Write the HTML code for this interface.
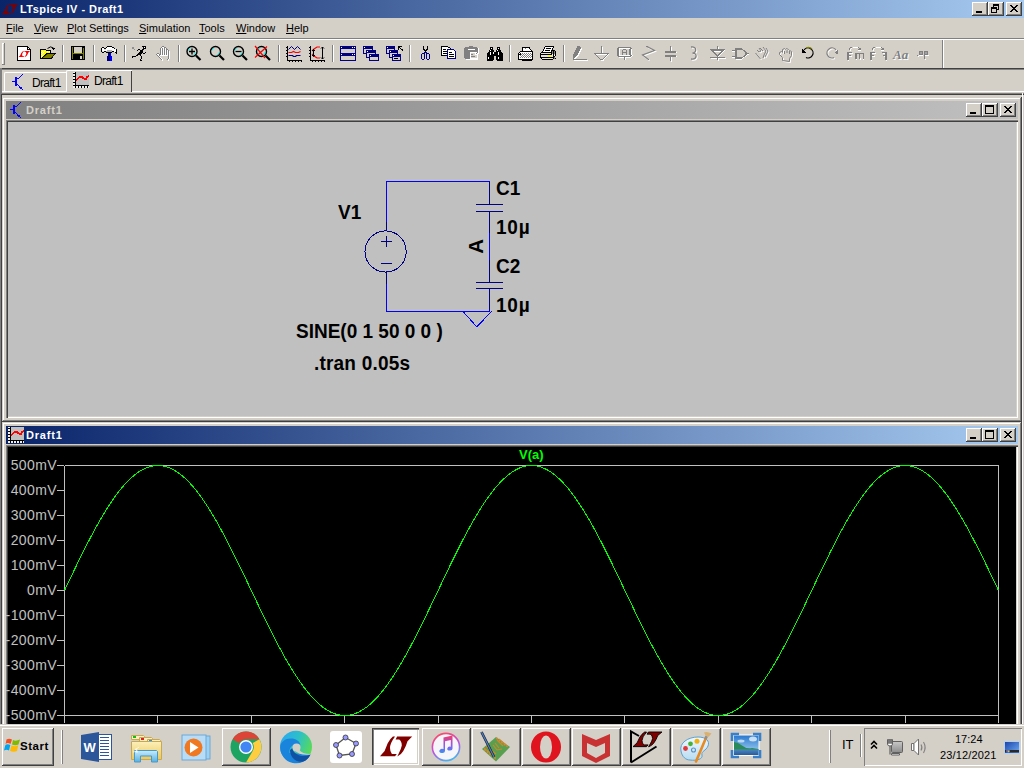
<!DOCTYPE html>
<html><head><meta charset="utf-8">
<style>
*{box-sizing:border-box;margin:0;padding:0}
html,body{width:1024px;height:768px;overflow:hidden;background:#d4d0c8;font-family:"Liberation Sans",sans-serif;font-size:11px;color:#000}
.a{position:absolute}
#title{left:0;top:0;width:1024px;height:18px;background:linear-gradient(to right,#0a246a,#a6caf0)}
#title .t{left:20px;top:3px;color:#fff;font-weight:bold;font-size:11px;letter-spacing:.45px;line-height:13px;white-space:nowrap}
.cb{width:16px;height:14px;background:#d4d0c8;box-shadow:inset -1px -1px #404040,inset 1px 1px #fff,inset -2px -2px #808080,inset 2px 2px #d4d0c8}
#menu{left:0;top:18px;width:1024px;height:20px}
#menu span{position:absolute;top:4px;white-space:nowrap}
#menu u{text-decoration:underline;text-underline-offset:1px}
.hl{height:1px;width:1024px;left:0}
.yl{position:absolute;right:967px;color:#c0c0c0;font-size:14px;letter-spacing:.4px;white-space:nowrap;line-height:16px}
.win{border:0}
.tbtn{background:#d4d0c8;box-shadow:inset -1px -1px #404040,inset 1px 1px #fff,inset -2px -2px #808080}
.tt{font-size:11px;line-height:13px;white-space:nowrap}
.tabt{font-size:12px;letter-spacing:-.7px;white-space:nowrap;line-height:13px}
.sl{font-weight:bold;font-size:19px;line-height:19px;white-space:nowrap;color:#000;transform:scaleY(1.08);transform-origin:0 16px}
</style></head><body>
<!-- main title bar -->
<div id="title" class="a">
  <svg class="a" style="left:2px;top:4px" width="16" height="11" viewBox="0 0 32 21"><g fill="#800000"><path d="M0 19.8H15L16.8 17.4H11.9Q10 15 10 11.5Q10 7 15 0.1H12.9Q9.8 2.6 7.7 6.8L4.6 14.6z"/><path d="M17.1 0H32.2L27.5 4.7Q26 9.9 23.3 14.6Q21 18.7 17.3 20L19.2 16.1Q21 12.5 21.8 8.9Q21.8 4.7 19.2 2.9H15.6z"/></g></svg>
  <div class="a t">LTspice IV - Draft1</div>
  <div class="a cb" style="left:972px;top:2px"></div>
  <div class="a cb" style="left:988px;top:2px"></div>
  <div class="a cb" style="left:1006px;top:2px"></div>
</div>
<!-- menu -->
<div id="menu" class="a">
  <span style="left:6px"><u>F</u>ile</span>
  <span style="left:34px"><u>V</u>iew</span>
  <span style="left:67px"><u>P</u>lot Settings</span>
  <span style="left:139px"><u>S</u>imulation</span>
  <span style="left:199px"><u>T</u>ools</span>
  <span style="left:236px"><u>W</u>indow</span>
  <span style="left:286px"><u>H</u>elp</span>
</div>
<div class="a hl" style="top:38px;background:#808080"></div>
<div class="a hl" style="top:39px;background:#fff"></div>
<!-- toolbar -->
<div id="tb" class="a" style="left:0;top:40px;width:1024px;height:28px"></div>
<!--TB-->
<svg class="a" style="left:0;top:0" width="1024" height="70" shape-rendering="crispEdges">
<!-- grip -->
<path d="M2 43h2v1h-1v20h-1z" fill="#fff"/><path d="M4 43h1v22h-3v-1h2z" fill="#808080"/>
<!-- separators -->
<g fill="#808080"><rect x="62" y="45" width="1" height="17"/><rect x="93" y="45" width="1" height="17"/><rect x="124" y="45" width="1" height="17"/><rect x="178" y="45" width="1" height="17"/><rect x="278" y="45" width="1" height="17"/><rect x="332" y="45" width="1" height="17"/><rect x="409" y="45" width="1" height="17"/><rect x="509" y="45" width="1" height="17"/><rect x="563" y="45" width="1" height="17"/><rect x="942" y="40" width="1" height="28"/></g>
<g fill="#fff"><rect x="63" y="45" width="1" height="17"/><rect x="94" y="45" width="1" height="17"/><rect x="125" y="45" width="1" height="17"/><rect x="179" y="45" width="1" height="17"/><rect x="279" y="45" width="1" height="17"/><rect x="333" y="45" width="1" height="17"/><rect x="410" y="45" width="1" height="17"/><rect x="510" y="45" width="1" height="17"/><rect x="564" y="45" width="1" height="17"/><rect x="943" y="40" width="1" height="28"/></g>
<!-- new doc -->
<path d="M17.5 46.5H27.5L30.5 49.5V60.5H17.5Z" fill="#fff" stroke="#000"/>
<path d="M27.5 46.5V49.5H30.5" fill="none" stroke="#000"/>
<g transform="translate(18.5,51) scale(0.36,0.3)" fill="#f00" shape-rendering="auto"><path d="M0 19.8H15L16.8 17.4H11.9Q10 15 10 11.5Q10 7 15 0.1H12.9Q9.8 2.6 7.7 6.8L4.6 14.6z"/><path d="M17.1 0H32.2L27.5 4.7Q26 9.9 23.3 14.6Q21 18.7 17.3 20L19.2 16.1Q21 12.5 21.8 8.9Q21.8 4.7 19.2 2.9H15.6z"/></g>
<!-- open folder -->
<path d="M40 49h5l1 1h5v3h5l-4.5 6H40z" fill="#000"/>
<path d="M41 50h4l1 1h4v2h-3l-6 5z" fill="#ffff00"/>
<path d="M42 51h1v1h-1zM44 51h1v1h-1zM41 52h1v1h-1zM43 52h1v1h-1zM42 53h1v1h-1zM41 54h1v1h-1zM42 55h1v1h-1zM41 56h1v1h-1zM47 51h1v1h-1zM49 51h1v1h-1z" fill="#fff"/>
<path d="M42.5 58L47.5 54H54.5L51 58z" fill="#808000" shape-rendering="auto"/>
<path d="M47.5 48.5Q50.5 45.5 53.5 48" fill="none" stroke="#000" shape-rendering="auto"/>
<path d="M52 48h3l-1.5 2z" fill="#000"/>
<!-- floppy -->
<rect x="71" y="46" width="14" height="14" fill="#000"/>
<rect x="72" y="47" width="1" height="12" fill="#808000"/><rect x="83" y="48" width="1" height="11" fill="#808000"/>
<rect x="74" y="47" width="8" height="6" fill="#d4d0c8"/>
<rect x="73" y="53" width="10" height="1" fill="#808000"/>
<rect x="80" y="56" width="2" height="3" fill="#d4d0c8"/>
<!-- hammer -->
<path fill="#000" d="M107 46h5v1h-5zM102 47h2v1h-2zM106 47h1v1h-1zM112 47h2v1h-2zM101 48h1v1h-1zM104 48h2v1h-2zM114 48h1v1h-1zM101 49h1v1h-1zM116 49h1v1h-1zM101 50h1v1h-1zM116 50h1v1h-1zM101 51h1v1h-1zM104 51h2v1h-2zM112 51h2v1h-2zM116 51h1v1h-1zM102 52h2v1h-2zM106 52h6v1h-6zM115 52h2v1h-2zM116 53h1v1h-1z"/><path fill="#fff" d="M107 47h5v1h-5zM102 48h2v1h-2zM106 48h8v1h-8zM102 49h2v1h-2zM106 49h10v1h-10zM102 50h5v1h-5zM112 50h4v1h-4zM114 51h2v1h-2z"/><path fill="#e0e0e0" d="M104 49h2v1h-2zM102 51h2v1h-2z"/><path fill="#b0b0b0" d="M107 50h5v1h-5zM106 51h6v1h-6z"/><path fill="#000080" d="M108 53h2v1h-2zM108 54h2v1h-2zM108 55h2v1h-2zM107 56h3v1h-3zM107 57h3v1h-3zM107 58h3v1h-3zM107 59h3v1h-3zM107 60h3v1h-3z"/><path fill="#0000ff" d="M110 53h1v1h-1zM110 54h1v1h-1zM110 55h1v1h-1zM110 56h2v1h-2zM110 57h2v1h-2zM110 58h2v1h-2zM110 59h2v1h-2zM110 60h2v1h-2z"/>
<!-- running man -->
<path fill="#000" d="M142 46h4v1h-4zM143 47h1v1h-1zM145 47h1v1h-1zM143 48h3v1h-3zM138 49h2v1h-2zM142 49h2v1h-2zM137 50h1v1h-1zM140 50h3v1h-3zM140 51h3v1h-3zM139 52h4v1h-4zM145 52h1v1h-1zM138 53h4v1h-4zM143 53h2v1h-2zM137 54h4v1h-4zM136 55h2v1h-2zM140 55h1v1h-1zM132 56h4v1h-4zM141 56h1v1h-1zM132 57h1v1h-1zM141 57h1v1h-1zM141 58h1v1h-1zM140 59h1v1h-1zM140 60h2v1h-2z"/><path fill="#909090" d="M132 47h2v1h-2zM132 48h2v1h-2zM134 49h1v1h-1z"/><path fill="#fff" d="M144 47h1v1h-1z"/>
<!-- hand disabled -->
<path fill="#808080" d="M162 46h2v1h-2zM161 47h1v1h-1zM164 47h2v1h-2zM160 48h1v1h-1zM162 48h1v1h-1zM164 48h1v1h-1zM166 48h1v1h-1zM160 49h1v1h-1zM162 49h1v1h-1zM164 49h1v1h-1zM166 49h2v1h-2zM160 50h1v1h-1zM162 50h1v1h-1zM164 50h1v1h-1zM166 50h1v1h-1zM168 50h1v1h-1zM160 51h1v1h-1zM162 51h1v1h-1zM164 51h1v1h-1zM166 51h1v1h-1zM168 51h1v1h-1zM160 52h1v1h-1zM162 52h1v1h-1zM164 52h1v1h-1zM166 52h1v1h-1zM168 52h1v1h-1zM157 53h2v1h-2zM160 53h1v1h-1zM162 53h1v1h-1zM164 53h1v1h-1zM166 53h1v1h-1zM168 53h1v1h-1zM156 54h1v1h-1zM159 54h2v1h-2zM162 54h1v1h-1zM164 54h1v1h-1zM166 54h1v1h-1zM168 54h1v1h-1zM157 55h1v1h-1zM159 55h1v1h-1zM168 55h1v1h-1zM158 56h1v1h-1zM168 56h1v1h-1zM159 57h1v1h-1zM168 57h1v1h-1zM160 58h1v1h-1zM168 58h1v1h-1zM161 59h1v1h-1zM167 59h1v1h-1z"/><path fill="#fff" d="M162 47h2v1h-2zM161 48h1v1h-1zM163 48h1v1h-1zM165 48h1v1h-1zM161 49h1v1h-1zM163 49h1v1h-1zM165 49h1v1h-1zM161 50h1v1h-1zM163 50h1v1h-1zM165 50h1v1h-1zM167 50h1v1h-1zM161 51h1v1h-1zM163 51h1v1h-1zM165 51h1v1h-1zM167 51h1v1h-1zM169 51h1v1h-1zM161 52h1v1h-1zM163 52h1v1h-1zM165 52h1v1h-1zM167 52h1v1h-1zM169 52h1v1h-1zM161 53h1v1h-1zM163 53h1v1h-1zM165 53h1v1h-1zM167 53h1v1h-1zM169 53h1v1h-1zM157 54h2v1h-2zM161 54h1v1h-1zM163 54h1v1h-1zM165 54h1v1h-1zM167 54h1v1h-1zM169 54h1v1h-1zM158 55h1v1h-1zM160 55h8v1h-8zM169 55h1v1h-1zM159 56h1v1h-1zM169 56h1v1h-1zM160 57h1v1h-1zM169 57h1v1h-1zM161 58h1v1h-1zM169 58h1v1h-1zM162 59h1v1h-1zM168 59h1v1h-1zM162 60h1v1h-1zM168 60h1v1h-1z"/>
<!-- magnifiers -->
<g shape-rendering="auto">
<circle cx="192" cy="51.5" r="5" fill="#d4d0c8" stroke="#000" stroke-width="1.4"/>
<path d="M189 51.5h6M192 48.5v6" stroke="#000" stroke-width="1.3"/>
<path d="M196 55.5l4.5 4.5" stroke="#000" stroke-width="2.2"/>
<path d="M188.5 50.5a4 4 0 0 1 2-2.5M195.5 52.5a4 4 0 0 1-2 2.5" stroke="#00ffff" stroke-width="1" fill="none"/>
<circle cx="215.5" cy="51.5" r="5" fill="#d4d0c8" stroke="#000" stroke-width="1.4"/>
<path d="M219.5 55.5l4.5 4.5" stroke="#000" stroke-width="2.2"/>
<path d="M212 50.5a4 4 0 0 1 2-2.5M219 52.5a4 4 0 0 1-2 2.5" stroke="#00ffff" stroke-width="1" fill="none"/>
<circle cx="238.5" cy="51.5" r="5" fill="#d4d0c8" stroke="#000" stroke-width="1.4"/>
<path d="M235.5 51.5h6" stroke="#000" stroke-width="1.3"/>
<path d="M242.5 55.5l4.5 4.5" stroke="#000" stroke-width="2.2"/>
<path d="M235 50.5a4 4 0 0 1 2-2.5M242 52.5a4 4 0 0 1-2 2.5" stroke="#00ffff" stroke-width="1" fill="none"/>
<circle cx="261.5" cy="51.5" r="5" fill="#d4d0c8" stroke="#000" stroke-width="1.4"/><path d="M258 50.5a4 4 0 0 1 2-2.5M265 52.5a4 4 0 0 1-2 2.5M259 53l4-3" stroke="#00ffff" stroke-width="1.3" fill="none"/>
<path d="M265.5 55.5l4.5 4.5" stroke="#000" stroke-width="2.2"/>
<path d="M255 46l10 12M267 46.5l-12 11" stroke="#f00" stroke-width="1.2"/>
</g>
<!-- plot icons -->
<g fill="#000"><rect x="287" y="46" width="1" height="15"/><rect x="287" y="60" width="15" height="1"/>
<path d="M286 47h1v1h-1zM286 50h1v1h-1zM286 53h1v1h-1zM286 56h1v1h-1zM289 61h1v1h-1zM292 61h1v1h-1zM295 61h1v1h-1zM298 61h1v1h-1zM301 61h1v1h-1z"/>
<rect x="310" y="46" width="1" height="15"/><rect x="310" y="60" width="15" height="1"/>
<path d="M309 47h1v1h-1zM309 50h1v1h-1zM309 53h1v1h-1zM309 56h1v1h-1zM312 61h1v1h-1zM315 61h1v1h-1zM318 61h1v1h-1zM321 61h1v1h-1zM324 61h1v1h-1z"/></g>
<g fill="none" shape-rendering="auto">
<path d="M288.5 49.5l3-3 3 3 3-3 3 3" stroke="#000080"/>
<path d="M288.5 52.5h3l2-1 2 1h3l2-1" stroke="#f00" stroke-width="1.2"/>
<path d="M288.5 55.5h4l1 1h2l1-1h4" stroke="#000080" stroke-width="1.2"/>
<path d="M320 47h-3l-3 2-2 2M312 54l2 2 3 2h3" stroke="#f00" stroke-width="1.2"/>
<path d="M322.5 47v12M321 48.5l1.5-1.5 1.5 1.5M321 57.5l1.5 1.5 1.5-1.5M313.5 50v6M312 51l1.5-1.5 1.5 1.5M312 55l1.5 1.5 1.5-1.5" stroke="#000"/>
</g>
<!-- tile -->
<path fill="#000080" d="M340 46h16v1h-16zM340 47h1v1h-1zM342 47h10v1h-10zM353 47h1v1h-1zM355 47h1v1h-1zM340 48h16v1h-16zM340 49h1v1h-1zM355 49h1v1h-1zM340 50h1v1h-1zM355 50h1v1h-1zM340 51h1v1h-1zM355 51h1v1h-1zM340 52h1v1h-1zM355 52h1v1h-1zM340 53h16v1h-16zM340 54h1v1h-1zM342 54h10v1h-10zM353 54h1v1h-1zM355 54h1v1h-1zM340 55h16v1h-16zM340 56h1v1h-1zM355 56h1v1h-1zM340 57h1v1h-1zM355 57h1v1h-1zM340 58h1v1h-1zM355 58h1v1h-1zM340 59h1v1h-1zM355 59h1v1h-1zM340 60h16v1h-16z"/><path fill="#fff" d="M341 47h1v1h-1zM352 47h1v1h-1zM354 47h1v1h-1zM341 54h1v1h-1zM352 54h1v1h-1zM354 54h1v1h-1z"/><path fill="#d4d0c8" d="M341 49h14v1h-14zM341 50h14v1h-14zM341 51h14v1h-14zM341 52h14v1h-14zM341 56h14v1h-14zM341 57h14v1h-14zM341 58h14v1h-14zM341 59h14v1h-14z"/>
<!-- cascade -->
<path fill="#000080" d="M363 46h10v1h-10zM363 47h1v1h-1zM365 47h8v1h-8zM363 48h10v1h-10zM363 49h1v1h-1zM372 49h1v1h-1zM363 50h1v1h-1zM372 50h1v1h-1zM363 51h1v1h-1zM372 51h1v1h-1zM363 52h1v1h-1zM372 52h1v1h-1zM363 53h10v1h-10z"/><path fill="#fff" d="M364 47h1v1h-1z"/><path fill="#d4d0c8" d="M364 49h8v1h-8zM364 50h8v1h-8zM364 51h8v1h-8zM364 52h8v1h-8z"/><path fill="#000080" d="M366 50h10v1h-10zM366 51h1v1h-1zM368 51h8v1h-8zM366 52h10v1h-10zM366 53h1v1h-1zM375 53h1v1h-1zM366 54h1v1h-1zM375 54h1v1h-1zM366 55h1v1h-1zM375 55h1v1h-1zM366 56h1v1h-1zM375 56h1v1h-1zM366 57h10v1h-10z"/><path fill="#fff" d="M367 51h1v1h-1z"/><path fill="#d4d0c8" d="M367 53h8v1h-8zM367 54h8v1h-8zM367 55h8v1h-8zM367 56h8v1h-8z"/><path fill="#000080" d="M369 54h10v1h-10zM369 55h1v1h-1zM371 55h8v1h-8zM369 56h10v1h-10zM369 57h1v1h-1zM378 57h1v1h-1zM369 58h1v1h-1zM378 58h1v1h-1zM369 59h1v1h-1zM378 59h1v1h-1zM369 60h10v1h-10z"/><path fill="#fff" d="M370 55h1v1h-1z"/><path fill="#d4d0c8" d="M370 57h8v1h-8zM370 58h8v1h-8zM370 59h8v1h-8z"/><path fill="#000080" d="M386 46h9v1h-9zM386 47h1v1h-1zM388 47h7v1h-7zM386 48h9v1h-9zM386 49h1v1h-1zM394 49h1v1h-1zM386 50h1v1h-1zM394 50h1v1h-1zM386 51h1v1h-1zM394 51h1v1h-1zM386 52h1v1h-1zM394 52h1v1h-1zM386 53h9v1h-9z"/><path fill="#fff" d="M387 47h1v1h-1z"/><path fill="#d4d0c8" d="M387 49h7v1h-7zM387 50h7v1h-7zM387 51h7v1h-7zM387 52h7v1h-7z"/><path fill="#000080" d="M389 50h9v1h-9zM389 51h1v1h-1zM391 51h7v1h-7zM389 52h9v1h-9zM389 53h1v1h-1zM397 53h1v1h-1zM389 54h1v1h-1zM397 54h1v1h-1zM389 55h1v1h-1zM397 55h1v1h-1zM389 56h1v1h-1zM397 56h1v1h-1zM389 57h9v1h-9z"/><path fill="#fff" d="M390 51h1v1h-1z"/><path fill="#d4d0c8" d="M390 53h7v1h-7zM390 54h7v1h-7zM390 55h7v1h-7zM390 56h7v1h-7z"/><path fill="#000080" d="M392 54h9v1h-9zM392 55h1v1h-1zM394 55h7v1h-7zM392 56h9v1h-9zM392 57h1v1h-1zM400 57h1v1h-1zM392 58h1v1h-1zM400 58h1v1h-1zM392 59h1v1h-1zM400 59h1v1h-1zM392 60h9v1h-9z"/><path fill="#fff" d="M393 55h1v1h-1z"/><path fill="#d4d0c8" d="M393 57h7v1h-7zM393 58h1v1h-1zM398 58h2v1h-2zM393 59h7v1h-7z"/><path fill="#000" d="M394 58h4v1h-4z"/><path fill="#000" d="M398 46h4v1h-4zM398 47h2v1h-2zM398 48h1v1h-1zM400 48h1v1h-1zM398 49h1v1h-1zM401 49h2v1h-2zM402 50h1v1h-1z"/>
<!-- scissors -->
<path fill="#000" d="M423 46h1v1h-1zM427 46h1v1h-1zM423 47h1v1h-1zM427 47h1v1h-1zM423 48h1v1h-1zM427 48h1v1h-1zM423 49h2v1h-2zM426 49h2v1h-2zM424 50h3v1h-3zM425 51h1v1h-1z"/><path fill="#000080" d="M424 52h3v1h-3zM422 53h3v1h-3zM426 53h3v1h-3zM421 54h1v1h-1zM424 54h1v1h-1zM426 54h1v1h-1zM429 54h1v1h-1zM421 55h1v1h-1zM424 55h1v1h-1zM426 55h1v1h-1zM429 55h1v1h-1zM421 56h1v1h-1zM424 56h1v1h-1zM426 56h1v1h-1zM429 56h1v1h-1zM421 57h1v1h-1zM424 57h1v1h-1zM426 57h1v1h-1zM429 57h1v1h-1zM421 58h1v1h-1zM424 58h1v1h-1zM426 58h1v1h-1zM429 58h1v1h-1zM422 59h2v1h-2zM427 59h2v1h-2z"/>
<!-- copy -->
<path fill="#000" d="M441 46h7v1h-7zM441 47h1v1h-1zM448 47h2v1h-2zM441 48h1v1h-1zM450 48h1v1h-1zM441 49h1v1h-1zM443 49h3v1h-3zM441 50h1v1h-1zM441 51h1v1h-1zM443 51h4v1h-4zM441 52h1v1h-1zM449 52h3v1h-3zM441 53h1v1h-1zM443 53h4v1h-4zM441 54h1v1h-1zM449 54h5v1h-5zM441 55h6v1h-6zM449 56h5v1h-5z"/><path fill="#fff" d="M442 47h6v1h-6zM442 48h8v1h-8zM442 49h1v1h-1zM446 49h1v1h-1zM442 50h5v1h-5zM448 50h6v1h-6zM442 51h1v1h-1zM448 51h7v1h-7zM442 52h5v1h-5zM448 52h1v1h-1zM452 52h3v1h-3zM442 53h1v1h-1zM448 53h7v1h-7zM442 54h5v1h-5zM448 54h1v1h-1zM454 54h1v1h-1zM448 55h7v1h-7zM448 56h1v1h-1zM454 56h1v1h-1zM448 57h7v1h-7z"/><path fill="#000080" d="M447 49h7v1h-7zM447 50h1v1h-1zM454 50h1v1h-1zM447 51h1v1h-1zM455 51h1v1h-1zM447 52h1v1h-1zM455 52h1v1h-1zM447 53h1v1h-1zM455 53h1v1h-1zM447 54h1v1h-1zM455 54h1v1h-1zM447 55h1v1h-1zM455 55h1v1h-1zM447 56h1v1h-1zM455 56h1v1h-1zM447 57h1v1h-1zM455 57h1v1h-1zM447 58h9v1h-9z"/>
<!-- paste disabled -->
<path fill="#000" d="M490 47h3v1h-3zM497 47h3v1h-3zM490 48h1v1h-1zM492 48h1v1h-1zM497 48h1v1h-1zM499 48h1v1h-1zM490 49h3v1h-3zM497 49h3v1h-3zM489 50h1v1h-1zM491 50h3v1h-3zM496 50h1v1h-1zM498 50h3v1h-3zM489 51h5v1h-5zM496 51h5v1h-5zM488 52h2v1h-2zM491 52h2v1h-2zM494 52h4v1h-4zM499 52h3v1h-3zM487 53h3v1h-3zM491 53h2v1h-2zM494 53h4v1h-4zM499 53h4v1h-4zM487 54h3v1h-3zM491 54h7v1h-7zM499 54h4v1h-4zM487 55h16v1h-16zM487 56h7v1h-7zM496 56h7v1h-7zM487 57h1v1h-1zM489 57h5v1h-5zM496 57h2v1h-2zM499 57h4v1h-4zM487 58h1v1h-1zM489 58h5v1h-5zM496 58h2v1h-2zM499 58h4v1h-4zM487 59h7v1h-7zM496 59h7v1h-7zM487 60h6v1h-6zM497 60h6v1h-6z"/><path fill="#fff" d="M491 48h1v1h-1zM498 48h1v1h-1zM490 50h1v1h-1zM497 50h1v1h-1zM490 52h1v1h-1zM493 52h1v1h-1zM498 52h1v1h-1zM490 53h1v1h-1zM493 53h1v1h-1zM498 53h1v1h-1zM490 54h1v1h-1zM498 54h1v1h-1zM488 57h1v1h-1zM498 57h1v1h-1zM488 58h1v1h-1zM498 58h1v1h-1z"/><path fill="#808080" d="M469 46h4v1h-4zM465 47h12v1h-12zM464 48h14v1h-14zM464 49h4v1h-4zM475 49h3v1h-3zM464 50h14v1h-14zM464 51h14v1h-14zM464 52h6v1h-6zM477 52h1v1h-1zM464 53h6v1h-6zM476 53h1v1h-1zM464 54h6v1h-6zM464 55h6v1h-6zM464 56h6v1h-6zM464 57h6v1h-6zM465 58h5v1h-5z"/><path fill="#fff" d="M478 48h1v1h-1zM468 49h7v1h-7zM478 49h1v1h-1zM478 50h1v1h-1zM478 51h1v1h-1zM470 52h7v1h-7zM478 52h1v1h-1zM470 53h1v1h-1zM475 53h1v1h-1zM477 53h2v1h-2zM470 54h1v1h-1zM475 54h3v1h-3zM470 55h1v1h-1zM477 55h1v1h-1zM470 56h1v1h-1zM477 56h1v1h-1zM470 57h1v1h-1zM477 57h1v1h-1zM470 58h8v1h-8zM466 59h12v1h-12z"/><path fill="#d4d0c8" d="M471 53h4v1h-4zM473 54h2v1h-2zM471 55h6v1h-6zM475 56h2v1h-2zM471 57h6v1h-6z"/><path fill="#808080" d="M471 54h2v1h-2zM471 56h4v1h-4z"/>
<!-- print preview -->
<path fill="#000" d="M522 47h8v1h-8zM522 48h1v1h-1zM529 48h1v1h-1zM522 49h1v1h-1zM530 49h1v1h-1zM522 50h1v1h-1zM531 50h1v1h-1zM520 51h13v1h-13zM519 52h1v1h-1zM532 52h1v1h-1zM518 53h1v1h-1zM520 53h1v1h-1zM532 53h1v1h-1zM518 54h3v1h-3zM532 54h1v1h-1zM518 55h1v1h-1zM532 55h1v1h-1zM518 56h1v1h-1zM532 56h1v1h-1zM518 57h1v1h-1zM532 57h1v1h-1zM518 58h1v1h-1zM532 58h1v1h-1zM518 59h15v1h-15zM522 60h10v1h-10z"/><path fill="#fff" d="M523 48h2v1h-2zM526 48h3v1h-3zM523 49h7v1h-7zM523 50h8v1h-8zM520 52h12v1h-12zM519 53h1v1h-1zM521 53h1v1h-1zM523 53h1v1h-1zM525 53h1v1h-1zM527 53h1v1h-1zM529 53h1v1h-1zM531 53h1v1h-1zM522 54h1v1h-1zM524 54h1v1h-1zM526 54h1v1h-1zM528 54h1v1h-1zM530 54h1v1h-1zM519 55h1v1h-1zM521 55h1v1h-1zM523 55h1v1h-1zM525 55h1v1h-1zM527 55h1v1h-1zM529 55h1v1h-1zM531 55h1v1h-1zM519 56h2v1h-2zM522 56h1v1h-1zM524 56h1v1h-1zM526 56h1v1h-1zM528 56h1v1h-1zM530 56h1v1h-1zM519 57h1v1h-1zM521 57h1v1h-1zM523 57h1v1h-1zM525 57h1v1h-1zM527 57h1v1h-1zM529 57h1v1h-1zM531 57h1v1h-1zM519 58h13v1h-13z"/><path fill="#808080" d="M525 48h1v1h-1zM522 53h1v1h-1zM524 53h1v1h-1zM526 53h1v1h-1zM528 53h1v1h-1zM530 53h1v1h-1zM521 54h1v1h-1zM523 54h1v1h-1zM525 54h1v1h-1zM527 54h1v1h-1zM529 54h1v1h-1zM531 54h1v1h-1zM520 55h1v1h-1zM522 55h1v1h-1zM524 55h1v1h-1zM526 55h1v1h-1zM528 55h1v1h-1zM530 55h1v1h-1zM521 56h1v1h-1zM523 56h1v1h-1zM525 56h1v1h-1zM527 56h1v1h-1zM529 56h1v1h-1zM531 56h1v1h-1zM520 57h1v1h-1zM522 57h1v1h-1zM524 57h1v1h-1zM526 57h1v1h-1zM528 57h1v1h-1zM530 57h1v1h-1z"/><path fill="#000" d="M545 46h9v1h-9zM544 47h1v1h-1zM553 47h1v1h-1zM544 48h1v1h-1zM546 48h5v1h-5zM552 48h1v1h-1zM543 49h1v1h-1zM552 49h1v1h-1zM543 50h1v1h-1zM545 50h5v1h-5zM551 50h4v1h-4zM542 51h1v1h-1zM551 51h1v1h-1zM553 51h1v1h-1zM555 51h1v1h-1zM541 52h11v1h-11zM553 52h1v1h-1zM555 52h1v1h-1zM540 53h1v1h-1zM551 53h1v1h-1zM553 53h1v1h-1zM555 53h1v1h-1zM540 54h12v1h-12zM553 54h1v1h-1zM555 54h1v1h-1zM540 55h1v1h-1zM553 55h1v1h-1zM555 55h1v1h-1zM540 56h1v1h-1zM553 56h2v1h-2zM540 57h14v1h-14zM541 58h1v1h-1zM553 58h1v1h-1zM555 58h1v1h-1zM542 59h11v1h-11z"/><path fill="#fff" d="M545 47h8v1h-8zM545 48h1v1h-1zM551 48h1v1h-1zM544 49h8v1h-8zM544 50h1v1h-1zM550 50h1v1h-1zM543 51h8v1h-8zM552 54h1v1h-1zM554 55h1v1h-1z"/><path fill="#808080" d="M552 51h1v1h-1zM554 51h1v1h-1zM552 52h1v1h-1zM554 52h1v1h-1zM552 53h1v1h-1zM554 53h1v1h-1zM554 57h1v1h-1zM554 58h1v1h-1z"/><path fill="#e8e4dc" d="M541 53h10v1h-10zM541 55h7v1h-7zM551 55h2v1h-2zM541 56h7v1h-7zM551 56h2v1h-2zM542 58h11v1h-11z"/><path fill="#ffff00" d="M548 55h3v1h-3zM548 56h3v1h-3z"/>
<!-- pencil disabled -->
<path fill="#808080" d="M577 46h3v1h-3zM577 47h4v1h-4zM576 48h5v1h-5zM576 49h4v1h-4zM575 50h5v1h-5zM575 51h4v1h-4zM574 52h5v1h-5zM574 53h4v1h-4zM573 54h5v1h-5zM573 55h4v1h-4zM573 56h3v1h-3zM573 57h2v1h-2zM573 58h1v1h-1zM573 59h14v1h-14z"/><path fill="#fff" d="M581 48h1v1h-1zM580 49h2v1h-2zM580 50h1v1h-1zM579 51h2v1h-2zM579 52h1v1h-1zM578 53h2v1h-2zM578 54h1v1h-1zM577 55h2v1h-2zM576 56h2v1h-2zM575 57h2v1h-2zM574 58h2v1h-2zM574 60h14v1h-14z"/>
<!-- ground disabled -->
<path fill="#808080" d="M601 46h1v1h-1zM601 47h1v1h-1zM601 48h1v1h-1zM601 49h1v1h-1zM601 50h1v1h-1zM601 51h1v1h-1zM601 52h1v1h-1zM594 53h15v1h-15zM595 54h1v1h-1zM607 54h1v1h-1zM596 55h1v1h-1zM606 55h1v1h-1zM597 56h1v1h-1zM605 56h1v1h-1zM598 57h1v1h-1zM604 57h1v1h-1zM599 58h1v1h-1zM603 58h1v1h-1zM600 59h3v1h-3z"/><path fill="#fff" d="M602 47h1v1h-1zM602 48h1v1h-1zM602 49h1v1h-1zM602 50h1v1h-1zM602 51h1v1h-1zM602 52h1v1h-1zM596 54h11v1h-11zM608 54h1v1h-1zM607 55h1v1h-1zM606 56h1v1h-1zM605 57h1v1h-1zM604 58h1v1h-1zM603 59h1v1h-1zM601 60h3v1h-3z"/><path fill="#808080" d="M618 47h13v1h-13zM617 48h2v1h-2zM630 48h2v1h-2zM617 49h2v1h-2zM623 49h3v1h-3zM629 49h2v1h-2zM617 50h2v1h-2zM622 50h1v1h-1zM626 50h1v1h-1zM629 50h2v1h-2zM617 51h2v1h-2zM622 51h1v1h-1zM626 51h1v1h-1zM629 51h2v1h-2zM617 52h2v1h-2zM622 52h5v1h-5zM629 52h2v1h-2zM617 53h2v1h-2zM622 53h1v1h-1zM626 53h1v1h-1zM629 53h2v1h-2zM617 54h2v1h-2zM622 54h1v1h-1zM626 54h1v1h-1zM629 54h2v1h-2zM617 55h2v1h-2zM630 55h2v1h-2zM618 56h13v1h-13zM624 57h1v1h-1zM624 58h1v1h-1zM624 59h1v1h-1z"/><path fill="#fff" d="M619 48h11v1h-11zM619 49h1v1h-1zM631 49h1v1h-1zM619 50h1v1h-1zM631 50h1v1h-1zM619 51h1v1h-1zM631 51h1v1h-1zM619 52h1v1h-1zM631 52h1v1h-1zM619 53h1v1h-1zM631 53h1v1h-1zM619 54h1v1h-1zM631 54h1v1h-1zM619 55h11v1h-11zM632 55h1v1h-1zM631 56h1v1h-1zM619 57h5v1h-5zM625 57h6v1h-6zM625 58h1v1h-1zM625 59h1v1h-1z"/>
<!-- resistor disabled -->
<g fill="none" shape-rendering="auto" stroke-width="1.2"><path d="M647 46.5L654.5 50.5L642.5 55L648.5 59.5" stroke="#fff" transform="translate(1,1)"/><path d="M647 46.5L654.5 50.5L642.5 55L648.5 59.5" stroke="#808080"/></g>
<path d="M646 46h2v1h-2zM648 59h1v1h-1z" fill="#808080"/>
<!-- capacitor disabled -->
<g stroke="#fff" fill="none" transform="translate(1,1)"><path d="M670.5 46v5M670.5 56v5M665 51.5h11M665 55.5h11"/></g>
<g stroke="#808080" fill="none"><path d="M670.5 46v5M670.5 56v5"/></g><g fill="#808080"><rect x="665" y="51" width="11" height="2"/><rect x="665" y="55" width="11" height="2"/></g>
<!-- inductor disabled -->
<g fill="none" shape-rendering="auto" stroke-width="1.3"><path d="M691 47C697 46 697 53 692.5 53C698 53 697 60 691 59" stroke="#fff" transform="translate(1,1)"/><path d="M691 47C697 46 697 53 692.5 53C698 53 697 60 691 59" stroke="#808080"/></g>
<!-- diode disabled -->
<path fill="#808080" d="M717 46h1v1h-1zM717 47h1v1h-1zM717 48h1v1h-1zM710 49h15v1h-15zM711 50h13v1h-13zM712 51h2v1h-2zM721 51h2v1h-2zM713 52h2v1h-2zM720 52h2v1h-2zM714 53h2v1h-2zM719 53h2v1h-2zM715 54h2v1h-2zM718 54h2v1h-2zM716 55h3v1h-3zM717 56h1v1h-1zM710 57h15v1h-15zM717 58h1v1h-1zM717 59h1v1h-1z"/><path fill="#fff" d="M718 47h1v1h-1zM718 48h1v1h-1zM724 50h1v1h-1zM714 51h7v1h-7zM723 51h1v1h-1zM722 52h1v1h-1zM721 53h1v1h-1zM720 54h1v1h-1zM719 55h1v1h-1zM718 56h1v1h-1zM711 58h6v1h-6zM718 58h8v1h-8zM718 59h1v1h-1zM718 60h1v1h-1z"/><path fill="#808080" d="M735 48h7v1h-7zM735 49h8v1h-8zM732 50h5v1h-5zM743 50h2v1h-2zM735 51h2v1h-2zM744 51h2v1h-2zM735 52h2v1h-2zM745 52h2v1h-2zM735 53h2v1h-2zM745 53h4v1h-4zM735 54h2v1h-2zM745 54h2v1h-2zM735 55h2v1h-2zM744 55h2v1h-2zM732 56h5v1h-5zM743 56h2v1h-2zM735 57h8v1h-8zM735 58h7v1h-7z"/><path fill="#fff" d="M732 51h3v1h-3zM747 54h2v1h-2zM746 55h1v1h-1zM745 56h1v1h-1zM732 57h3v1h-3zM743 57h1v1h-1zM742 58h1v1h-1zM736 59h6v1h-6z"/>
<!-- move hand disabled -->
<g fill="none" shape-rendering="auto"><path d="M755.5 53l5 6M757 50l2 2 2-1-2-3M760 48l3 3M763 47l3 4-2 4-1 3M766 48l2 3-3 6" stroke="#fff" transform="translate(1,1)"/><path d="M755.5 53l5 6M757 50l2 2 2-1-2-3M760 48l3 3M763 47l3 4-2 4-1 3M766 48l2 3-3 6" stroke="#808080"/></g>
<!-- drag fist disabled -->
<g fill="none" shape-rendering="auto"><path d="M782.5 60.5v-3l-3-3v-2l2-1 1 1v-3l2-1 1 1 1-1 2 1 1 1 2 1v4l-2 3v3z" stroke="#fff" transform="translate(1,1)"/><path d="M782.5 60.5v-3l-3-3v-2l2-1 1 1v-3l2-1 1 1 1-1 2 1 1 1 2 1v4l-2 3v3z" stroke="#808080"/><path d="M784.5 51v3M787 50v3M789.5 51v3" stroke="#808080"/></g>
<!-- undo -->
<g fill="none" shape-rendering="auto"><path d="M804 50a5 5 0 1 1 2 7.5" stroke="#000" stroke-width="1.2"/><path d="M806 48a5 5 0 0 1 6 1" stroke="#808000" stroke-width="1.2"/></g>
<path d="M802 48l0 5 4 0z" fill="#000"/>
<!-- redo disabled -->
<g fill="none" shape-rendering="auto"><path d="M836 50a5 5 0 1 0-2 7.5" stroke="#fff" stroke-width="1.2" transform="translate(1,1)"/><path d="M836 50a5 5 0 1 0-2 7.5" stroke="#808080" stroke-width="1.2"/></g>
<path d="M838 49l0 5 -4 -1z" fill="#808080"/>
<!-- rotate disabled -->
<path fill="#808080" d="M850 47h2v1h-2zM858 47h1v1h-1zM849 48h1v1h-1zM859 48h2v1h-2zM849 49h1v1h-1zM858 49h3v1h-3zM847 52h5v1h-5zM847 53h2v1h-2zM855 53h9v1h-9zM847 54h2v1h-2zM855 54h2v1h-2zM859 54h1v1h-1zM863 54h1v1h-1zM847 55h4v1h-4zM855 55h2v1h-2zM859 55h1v1h-1zM863 55h1v1h-1zM847 56h2v1h-2zM855 56h2v1h-2zM859 56h1v1h-1zM863 56h1v1h-1zM847 57h2v1h-2zM855 57h2v1h-2zM859 57h1v1h-1zM863 57h1v1h-1zM847 58h2v1h-2zM855 58h2v1h-2zM859 58h1v1h-1zM863 58h1v1h-1zM847 59h2v1h-2z"/><path fill="#fff" d="M853 47h5v1h-5zM851 48h1v1h-1zM850 49h1v1h-1zM850 50h1v1h-1zM858 50h3v1h-3zM849 53h4v1h-4zM849 56h3v1h-3zM860 58h1v1h-1zM856 59h1v1h-1zM860 59h1v1h-1zM863 59h1v1h-1zM848 60h1v1h-1z"/><path fill="#808080" d="M873 47h2v1h-2zM881 47h1v1h-1zM872 48h1v1h-1zM882 48h2v1h-2zM872 49h1v1h-1zM881 49h3v1h-3zM870 52h5v1h-5zM882 52h5v1h-5zM870 53h2v1h-2zM885 53h2v1h-2zM870 54h2v1h-2zM885 54h2v1h-2zM870 55h4v1h-4zM883 55h4v1h-4zM870 56h2v1h-2zM885 56h2v1h-2zM870 57h2v1h-2zM885 57h2v1h-2zM870 58h2v1h-2zM885 58h2v1h-2zM870 59h2v1h-2zM885 59h2v1h-2z"/><path fill="#fff" d="M876 47h5v1h-5zM874 48h1v1h-1zM873 49h1v1h-1zM873 50h1v1h-1zM881 50h3v1h-3zM872 53h4v1h-4zM883 53h2v1h-2zM872 56h3v1h-3zM884 56h1v1h-1zM871 60h1v1h-1zM886 60h1v1h-1z"/><path fill="#808080" d="M919 51h4v1h-4zM924 51h4v1h-4zM919 52h1v1h-1zM922 52h1v1h-1zM924 52h1v1h-1zM927 52h1v1h-1zM919 53h1v1h-1zM922 53h1v1h-1zM924 53h1v1h-1zM927 53h1v1h-1zM919 54h4v1h-4zM924 54h4v1h-4zM917 55h1v1h-1zM924 55h1v1h-1zM924 56h1v1h-1zM924 57h1v1h-1zM924 58h1v1h-1z"/><path fill="#a0a0a0" d="M920 52h2v1h-2zM925 52h2v1h-2zM920 53h2v1h-2zM925 53h2v1h-2z"/><path fill="#fff" d="M919 55h4v1h-4zM925 55h4v1h-4zM918 56h1v1h-1zM925 59h1v1h-1z"/>
<!-- text Aa disabled -->
<text x="893" y="59" font-family="Liberation Serif" font-style="italic" font-weight="bold" font-size="13" fill="#fff" transform="translate(1,1)">Aa</text>
<text x="893" y="59" font-family="Liberation Serif" font-style="italic" font-weight="bold" font-size="13" fill="#808080">Aa</text>
</svg>
<!--/TB-->
<div class="a hl" style="top:68px;background:#404040"></div>
<!-- tabs -->
<!--TABS-->
<div class="a" style="left:0;top:69px;width:1024px;height:1px;background:#808080"></div>
<div class="a" style="left:0;top:68px;width:2px;height:26px;background:#808080"></div>
<div class="a" style="left:2px;top:91px;width:1022px;height:1px;background:#fff"></div>
<div class="a" style="left:2px;top:92px;width:1022px;height:1px;background:#d4d0c8"></div>
<!-- tab1 -->
<div class="a" style="left:4px;top:72px;width:62px;height:19px;border-top:1px solid #fff;border-left:1px solid #fff;border-top-left-radius:2px"></div>
<!-- tab2 -->
<div class="a" style="left:66px;top:70px;width:66px;height:22px;background:#d4d0c8;border-top:1px solid #fff;border-left:1px solid #fff;border-top-left-radius:2px;box-shadow:inset -1px 0 #808080"></div>
<div class="a" style="left:131px;top:71px;width:1px;height:21px;background:#404040"></div>
<div class="a tabt" style="left:32px;top:77px">Draft&#8202;1</div>
<div class="a tabt" style="left:94px;top:75px">Draft&#8202;1</div>
<svg class="a" style="left:0;top:66px" width="140" height="30" shape-rendering="crispEdges">
 </svg><svg class="a" style="left:0;top:0" width="40" height="100" shape-rendering="crispEdges"><path fill="#0000ff" d="M22 74h1v1h-1zM21 75h1v1h-1zM20 76h1v1h-1zM15 77h2v1h-2zM19 77h1v1h-1zM15 78h4v1h-4zM15 79h2v1h-2zM15 80h2v1h-2zM12 81h5v1h-5zM15 82h2v1h-2zM15 83h2v1h-2zM15 84h3v1h-3zM15 85h2v1h-2zM18 85h1v1h-1zM19 86h1v1h-1zM19 87h3v1h-3zM20 88h2v1h-2zM22 89h1v1h-1z"/></svg><svg class="a" style="left:0;top:66px" width="140" height="30" shape-rendering="crispEdges">
 </svg><svg class="a" style="left:0;top:0" width="100" height="100" shape-rendering="crispEdges"><path fill="#f0f0f0" d="M73 72h2v1h-2zM73 74h2v1h-2zM73 75h2v1h-2zM73 77h2v1h-2zM73 78h2v1h-2zM73 80h2v1h-2zM73 81h2v1h-2zM73 83h2v1h-2zM73 84h2v1h-2zM73 86h2v1h-2zM76 86h2v1h-2zM79 86h2v1h-2zM82 86h2v1h-2zM85 86h2v1h-2zM88 86h1v1h-1zM73 87h2v1h-2zM76 87h2v1h-2zM79 87h2v1h-2zM82 87h2v1h-2zM85 87h2v1h-2zM88 87h1v1h-1z"/><path fill="#000" d="M75 72h1v1h-1zM73 73h3v1h-3zM75 74h1v1h-1zM75 75h1v1h-1zM73 76h3v1h-3zM75 77h1v1h-1zM75 78h1v1h-1zM73 79h3v1h-3zM75 80h1v1h-1zM75 81h1v1h-1zM73 82h3v1h-3zM75 83h1v1h-1zM75 84h1v1h-1zM73 85h16v1h-16zM75 86h1v1h-1zM78 86h1v1h-1zM81 86h1v1h-1zM84 86h1v1h-1zM87 86h1v1h-1zM75 87h1v1h-1zM78 87h1v1h-1zM81 87h1v1h-1zM84 87h1v1h-1zM87 87h1v1h-1z"/><path fill="#c0c0c0" d="M76 72h13v1h-13zM76 73h13v1h-13zM76 74h13v1h-13zM76 75h12v1h-12zM76 76h3v1h-3zM83 76h3v1h-3zM76 77h2v1h-2zM84 77h2v1h-2zM88 77h1v1h-1zM76 78h1v1h-1zM79 78h3v1h-3zM87 78h2v1h-2zM78 79h6v1h-6zM87 79h2v1h-2zM77 80h12v1h-12zM76 81h13v1h-13zM76 82h13v1h-13zM76 83h13v1h-13zM76 84h13v1h-13z"/><path fill="#f00" d="M88 75h1v1h-1zM79 76h4v1h-4zM86 76h3v1h-3zM78 77h6v1h-6zM86 77h2v1h-2zM77 78h2v1h-2zM82 78h5v1h-5zM76 79h2v1h-2zM84 79h3v1h-3zM76 80h1v1h-1z"/>
</svg>
<!--/TABS-->
<!-- MDI client -->
<div class="a" style="left:0;top:93px;width:1024px;height:1px;background:#808080"></div>
<div class="a" style="left:0;top:94px;width:1024px;height:1px;background:#404040"></div>
<div class="a" style="left:0;top:93px;width:1px;height:640px;background:#808080"></div>
<div class="a" style="left:1px;top:94px;width:1px;height:640px;background:#404040"></div>

<div class="a" style="left:1022px;top:93px;width:1px;height:631px;background:#fff"></div>
<!-- schematic window -->
<div class="a" style="left:2px;top:97px;width:1020px;height:325px;background:#d4d0c8;box-shadow:inset -1px -1px #404040,inset 1px 1px #d4d0c8,inset -2px -2px #808080,inset 2px 2px #fff"></div>
<div class="a" style="left:6px;top:101px;width:1012px;height:18px;background:linear-gradient(to right,#808080,#c0c0c0)">
  <div class="a" style="left:20px;top:3px;color:#d4d0c8;font-weight:bold;font-size:11px;letter-spacing:.8px;line-height:13px">Draft1</div>
  <div class="a cb" style="left:960px;top:2px"></div>
  <div class="a cb" style="left:976px;top:2px"></div>
  <div class="a cb" style="left:994px;top:2px"></div>
</div>
<div class="a" style="left:6px;top:120px;width:1012px;height:298px;background:#c0c0c0;box-shadow:inset 1px 1px #808080,inset 2px 2px #404040,inset -1px -1px #fff,inset -2px -2px #d4d0c8"></div>
<svg class="a" style="left:0;top:0" width="1024" height="420" shape-rendering="crispEdges">
 <g fill="none" stroke="#0000ff" stroke-width="1">
  <path d="M386.5 222V181.5H489.5M386.5 284V311.5H489.5M489.5 233V260"/>
  <path d="M463 311.5L476.8 326.8L491.5 311.5"/>
 </g>
 <g fill="none" stroke="#000080" stroke-width="1">
  <path d="M386.5 222V231M386.5 271V284M381 241.5H392M386.5 236V247M381 263.5H392"/>
  <path d="M489.5 181.5V204M476 204.5H503M476 211.5H503M489.5 211V233M489.5 260V282M476 282.5H503M476 288.5H503M489.5 288V311"/>
  <circle cx="385.6" cy="251.5" r="20.6"/>
 </g>
</svg>
<div class="a sl" style="left:338px;top:203px">V1</div>
<div class="a sl" style="left:496px;top:179px">C1</div>
<div class="a sl" style="left:496px;top:218px;letter-spacing:.8px">10µ</div>
<div class="a sl" style="left:496px;top:257px">C2</div>
<div class="a sl" style="left:496px;top:296px;letter-spacing:.8px">10µ</div>
<div class="a sl" style="left:296px;top:322px">SINE(0 1 50 0 0 )</div>
<div class="a sl" style="left:314px;top:354px;letter-spacing:.2px">.tran 0.05s</div>
<div class="a sl" style="left:466px;top:235px;transform:rotate(-90deg) scale(1.08);transform-origin:9px 9px">A</div>


<!-- waveform window -->
<div class="a" style="left:2px;top:422px;width:1020px;height:360px;background:#d4d0c8;box-shadow:inset -1px 0 #404040,inset 1px 1px #d4d0c8,inset -2px 0 #808080,inset 2px 2px #fff"></div>
<div class="a" style="left:6px;top:426px;width:1012px;height:18px;background:linear-gradient(to right,#0a246a,#a6caf0)">
  <div class="a" style="left:20px;top:3px;color:#fff;font-weight:bold;font-size:11px;letter-spacing:.8px;line-height:13px">Draft1</div>
  <div class="a cb" style="left:960px;top:2px"></div>
  <div class="a cb" style="left:976px;top:2px"></div>
  <div class="a cb" style="left:994px;top:2px"></div>
</div>
<div class="a" style="left:6px;top:445px;width:1012px;height:300px;background:#000;box-shadow:inset 1px 1px #808080,inset 2px 2px #404040,inset -1px 0 #fff,inset -2px 0 #d4d0c8"></div>
<div class="yl" style="top:457px">500mV</div><div class="yl" style="top:482px">400mV</div><div class="yl" style="top:507px">300mV</div><div class="yl" style="top:532px">200mV</div><div class="yl" style="top:557px">100mV</div><div class="yl" style="top:582px">0mV</div><div class="yl" style="top:607px">-100mV</div><div class="yl" style="top:632px">-200mV</div><div class="yl" style="top:657px">-300mV</div><div class="yl" style="top:682px">-400mV</div><div class="yl" style="top:707px">-500mV</div>
<svg class="a" style="left:0;top:0" width="1024" height="724">
 <g stroke="#c0c0c0" stroke-width="1" shape-rendering="crispEdges" fill="none">
  <path d="M64.5 465.5H998.5V723M64.5 465.5V723M64.5 715.5H998.5"/>
  <line x1="57" y1="465.5" x2="64" y2="465.5"/><line x1="57" y1="490.5" x2="64" y2="490.5"/><line x1="57" y1="515.5" x2="64" y2="515.5"/><line x1="57" y1="540.5" x2="64" y2="540.5"/><line x1="57" y1="565.5" x2="64" y2="565.5"/><line x1="57" y1="590.5" x2="64" y2="590.5"/><line x1="57" y1="615.5" x2="64" y2="615.5"/><line x1="57" y1="640.5" x2="64" y2="640.5"/><line x1="57" y1="665.5" x2="64" y2="665.5"/><line x1="57" y1="690.5" x2="64" y2="690.5"/><line x1="57" y1="715.5" x2="64" y2="715.5"/> <line x1="157.5" y1="715" x2="157.5" y2="723"/><line x1="251.5" y1="715" x2="251.5" y2="723"/><line x1="344.5" y1="715" x2="344.5" y2="723"/><line x1="438.5" y1="715" x2="438.5" y2="723"/><line x1="531.5" y1="715" x2="531.5" y2="723"/><line x1="624.5" y1="715" x2="624.5" y2="723"/><line x1="718.5" y1="715" x2="718.5" y2="723"/><line x1="811.5" y1="715" x2="811.5" y2="723"/><line x1="905.5" y1="715" x2="905.5" y2="723"/><line x1="57" y1="465.5" x2="64" y2="465.5"/><line x1="57" y1="490.5" x2="64" y2="490.5"/><line x1="57" y1="515.5" x2="64" y2="515.5"/><line x1="57" y1="540.5" x2="64" y2="540.5"/><line x1="57" y1="565.5" x2="64" y2="565.5"/><line x1="57" y1="590.5" x2="64" y2="590.5"/><line x1="57" y1="615.5" x2="64" y2="615.5"/><line x1="57" y1="640.5" x2="64" y2="640.5"/><line x1="57" y1="665.5" x2="64" y2="665.5"/><line x1="57" y1="690.5" x2="64" y2="690.5"/><line x1="57" y1="715.5" x2="64" y2="715.5"/>
 </g>
 <polyline fill="none" stroke="#00ff00" stroke-width="1" shape-rendering="crispEdges" points="64.5,590.5 66.5,586.3 68.5,582.1 70.5,577.9 72.5,573.7 74.5,569.6 76.5,565.4 78.5,561.3 80.5,557.3 82.5,553.2 84.5,549.2 86.5,545.3 88.5,541.4 90.5,537.6 92.5,533.8 94.5,530.1 96.5,526.4 98.5,522.9 100.5,519.4 102.5,515.9 104.5,512.6 106.5,509.4 108.5,506.2 110.5,503.2 112.5,500.2 114.5,497.3 116.5,494.6 118.5,492.0 120.5,489.4 122.5,487.0 124.5,484.7 126.5,482.5 128.5,480.5 130.5,478.5 132.5,476.7 134.5,475.1 136.5,473.5 138.5,472.1 140.5,470.8 142.5,469.7 144.5,468.7 146.5,467.8 148.5,467.1 150.5,466.5 152.5,466.0 154.5,465.7 156.5,465.5 158.5,465.5 160.5,465.6 162.5,465.9 164.5,466.3 166.5,466.8 168.5,467.5 170.5,468.3 172.5,469.2 174.5,470.3 176.5,471.6 178.5,472.9 180.5,474.4 182.5,476.0 184.5,477.8 186.5,479.7 188.5,481.7 190.5,483.8 192.5,486.1 194.5,488.4 196.5,490.9 198.5,493.5 200.5,496.2 202.5,499.0 204.5,502.0 206.5,505.0 208.5,508.1 210.5,511.3 212.5,514.6 214.5,518.0 216.5,521.4 218.5,525.0 220.5,528.6 222.5,532.3 224.5,536.0 226.5,539.9 228.5,543.7 230.5,547.7 232.5,551.6 234.5,555.7 236.5,559.7 238.5,563.8 240.5,567.9 242.5,572.1 244.5,576.2 246.5,580.4 248.5,584.6 250.5,588.8 252.5,593.0 254.5,597.2 256.5,601.4 258.5,605.6 260.5,609.8 262.5,613.9 264.5,618.0 266.5,622.1 268.5,626.2 270.5,630.2 272.5,634.1 274.5,638.0 276.5,641.9 278.5,645.7 280.5,649.4 282.5,653.1 284.5,656.7 286.5,660.3 288.5,663.7 290.5,667.1 292.5,670.3 294.5,673.5 296.5,676.6 298.5,679.6 300.5,682.5 302.5,685.3 304.5,688.0 306.5,690.6 308.5,693.0 310.5,695.4 312.5,697.6 314.5,699.7 316.5,701.7 318.5,703.6 320.5,705.3 322.5,706.9 324.5,708.4 326.5,709.7 328.5,710.9 330.5,712.0 332.5,712.9 334.5,713.7 336.5,714.3 338.5,714.8 340.5,715.2 342.5,715.4 344.5,715.5 346.5,715.4 348.5,715.2 350.5,714.9 352.5,714.4 354.5,713.8 356.5,713.0 358.5,712.1 360.5,711.1 362.5,709.9 364.5,708.6 366.5,707.2 368.5,705.6 370.5,703.9 372.5,702.1 374.5,700.1 376.5,698.0 378.5,695.8 380.5,693.5 382.5,691.1 384.5,688.5 386.5,685.9 388.5,683.1 390.5,680.2 392.5,677.2 394.5,674.2 396.5,671.0 398.5,667.7 400.5,664.4 402.5,660.9 404.5,657.4 406.5,653.8 408.5,650.2 410.5,646.5 412.5,642.7 414.5,638.8 416.5,634.9 418.5,631.0 420.5,627.0 422.5,622.9 424.5,618.8 426.5,614.7 428.5,610.6 430.5,606.4 432.5,602.3 434.5,598.1 436.5,593.9 438.5,589.7 440.5,585.5 442.5,581.3 444.5,577.1 446.5,572.9 448.5,568.7 450.5,564.6 452.5,560.5 454.5,556.5 456.5,552.4 458.5,548.5 460.5,544.5 462.5,540.6 464.5,536.8 466.5,533.0 468.5,529.3 470.5,525.7 472.5,522.2 474.5,518.7 476.5,515.3 478.5,512.0 480.5,508.7 482.5,505.6 484.5,502.6 486.5,499.6 488.5,496.8 490.5,494.1 492.5,491.4 494.5,488.9 496.5,486.5 498.5,484.3 500.5,482.1 502.5,480.1 504.5,478.2 506.5,476.4 508.5,474.7 510.5,473.2 512.5,471.8 514.5,470.6 516.5,469.5 518.5,468.5 520.5,467.6 522.5,466.9 524.5,466.4 526.5,465.9 528.5,465.7 530.5,465.5 532.5,465.5 534.5,465.7 536.5,465.9 538.5,466.4 540.5,466.9 542.5,467.6 544.5,468.5 546.5,469.5 548.5,470.6 550.5,471.8 552.5,473.2 554.5,474.7 556.5,476.4 558.5,478.2 560.5,480.1 562.5,482.1 564.5,484.3 566.5,486.5 568.5,488.9 570.5,491.4 572.5,494.1 574.5,496.8 576.5,499.6 578.5,502.6 580.5,505.6 582.5,508.7 584.5,512.0 586.5,515.3 588.5,518.7 590.5,522.2 592.5,525.7 594.5,529.3 596.5,533.0 598.5,536.8 600.5,540.6 602.5,544.5 604.5,548.5 606.5,552.4 608.5,556.5 610.5,560.5 612.5,564.6 614.5,568.7 616.5,572.9 618.5,577.1 620.5,581.3 622.5,585.5 624.5,589.7 626.5,593.9 628.5,598.1 630.5,602.3 632.5,606.4 634.5,610.6 636.5,614.7 638.5,618.8 640.5,622.9 642.5,627.0 644.5,631.0 646.5,634.9 648.5,638.8 650.5,642.7 652.5,646.5 654.5,650.2 656.5,653.8 658.5,657.4 660.5,660.9 662.5,664.4 664.5,667.7 666.5,671.0 668.5,674.2 670.5,677.2 672.5,680.2 674.5,683.1 676.5,685.9 678.5,688.5 680.5,691.1 682.5,693.5 684.5,695.8 686.5,698.0 688.5,700.1 690.5,702.1 692.5,703.9 694.5,705.6 696.5,707.2 698.5,708.6 700.5,709.9 702.5,711.1 704.5,712.1 706.5,713.0 708.5,713.8 710.5,714.4 712.5,714.9 714.5,715.2 716.5,715.4 718.5,715.5 720.5,715.4 722.5,715.2 724.5,714.8 726.5,714.3 728.5,713.7 730.5,712.9 732.5,712.0 734.5,710.9 736.5,709.7 738.5,708.4 740.5,706.9 742.5,705.3 744.5,703.6 746.5,701.7 748.5,699.7 750.5,697.6 752.5,695.4 754.5,693.0 756.5,690.6 758.5,688.0 760.5,685.3 762.5,682.5 764.5,679.6 766.5,676.6 768.5,673.5 770.5,670.3 772.5,667.1 774.5,663.7 776.5,660.3 778.5,656.7 780.5,653.1 782.5,649.4 784.5,645.7 786.5,641.9 788.5,638.0 790.5,634.1 792.5,630.2 794.5,626.2 796.5,622.1 798.5,618.0 800.5,613.9 802.5,609.8 804.5,605.6 806.5,601.4 808.5,597.2 810.5,593.0 812.5,588.8 814.5,584.6 816.5,580.4 818.5,576.2 820.5,572.1 822.5,567.9 824.5,563.8 826.5,559.7 828.5,555.7 830.5,551.6 832.5,547.7 834.5,543.7 836.5,539.9 838.5,536.0 840.5,532.3 842.5,528.6 844.5,525.0 846.5,521.4 848.5,518.0 850.5,514.6 852.5,511.3 854.5,508.1 856.5,505.0 858.5,502.0 860.5,499.0 862.5,496.2 864.5,493.5 866.5,490.9 868.5,488.4 870.5,486.1 872.5,483.8 874.5,481.7 876.5,479.7 878.5,477.8 880.5,476.0 882.5,474.4 884.5,472.9 886.5,471.6 888.5,470.3 890.5,469.2 892.5,468.3 894.5,467.5 896.5,466.8 898.5,466.3 900.5,465.9 902.5,465.6 904.5,465.5 906.5,465.5 908.5,465.7 910.5,466.0 912.5,466.5 914.5,467.1 916.5,467.8 918.5,468.7 920.5,469.7 922.5,470.8 924.5,472.1 926.5,473.5 928.5,475.1 930.5,476.7 932.5,478.5 934.5,480.5 936.5,482.5 938.5,484.7 940.5,487.0 942.5,489.4 944.5,492.0 946.5,494.6 948.5,497.3 950.5,500.2 952.5,503.2 954.5,506.2 956.5,509.4 958.5,512.6 960.5,515.9 962.5,519.4 964.5,522.9 966.5,526.4 968.5,530.1 970.5,533.8 972.5,537.6 974.5,541.4 976.5,545.3 978.5,549.2 980.5,553.2 982.5,557.3 984.5,561.3 986.5,565.4 988.5,569.6 990.5,573.7 992.5,577.9 994.5,582.1 996.5,586.3 998.5,590.5"/>
</svg>
<div class="a" style="left:519px;top:447px;color:#00ff00;font-weight:bold;font-size:13px">V(a)</div>

<!--GLYPHS--><svg class="a" style="left:0;top:0" width="1024" height="450" shape-rendering="crispEdges"><path fill="#000" d="M976 11h6v1h-6zM976 12h6v1h-6zM993 4h6v1h-6zM993 5h6v1h-6zM993 6h1v1h-1zM998 6h1v1h-1zM991 7h6v1h-6zM998 7h1v1h-1zM991 8h6v1h-6zM998 8h1v1h-1zM991 9h1v1h-1zM996 9h3v1h-3zM991 10h1v1h-1zM996 10h1v1h-1zM991 11h1v1h-1zM996 11h1v1h-1zM991 12h6v1h-6zM1010 5h2v1h-2zM1016 5h2v1h-2zM1011 6h2v1h-2zM1015 6h2v1h-2zM1012 7h4v1h-4zM1013 8h2v1h-2zM1012 9h4v1h-4zM1011 10h2v1h-2zM1015 10h2v1h-2zM1010 11h2v1h-2zM1016 11h2v1h-2zM970 112h6v1h-6zM970 113h6v1h-6zM985 105h9v1h-9zM985 106h9v1h-9zM985 107h1v1h-1zM993 107h1v1h-1zM985 108h1v1h-1zM993 108h1v1h-1zM985 109h1v1h-1zM993 109h1v1h-1zM985 110h1v1h-1zM993 110h1v1h-1zM985 111h1v1h-1zM993 111h1v1h-1zM985 112h1v1h-1zM993 112h1v1h-1zM985 113h9v1h-9zM1004 106h2v1h-2zM1010 106h2v1h-2zM1005 107h2v1h-2zM1009 107h2v1h-2zM1006 108h4v1h-4zM1007 109h2v1h-2zM1006 110h4v1h-4zM1005 111h2v1h-2zM1009 111h2v1h-2zM1004 112h2v1h-2zM1010 112h2v1h-2zM970 437h6v1h-6zM970 438h6v1h-6zM985 430h9v1h-9zM985 431h9v1h-9zM985 432h1v1h-1zM993 432h1v1h-1zM985 433h1v1h-1zM993 433h1v1h-1zM985 434h1v1h-1zM993 434h1v1h-1zM985 435h1v1h-1zM993 435h1v1h-1zM985 436h1v1h-1zM993 436h1v1h-1zM985 437h1v1h-1zM993 437h1v1h-1zM985 438h9v1h-9zM1004 431h2v1h-2zM1010 431h2v1h-2zM1005 432h2v1h-2zM1009 432h2v1h-2zM1006 433h4v1h-4zM1007 434h2v1h-2zM1006 435h4v1h-4zM1005 436h2v1h-2zM1009 436h2v1h-2zM1004 437h2v1h-2zM1010 437h2v1h-2z"/></svg><svg class="a" style="left:0;top:0" width="30" height="450" shape-rendering="crispEdges">
 <path fill="#0000ff" d="M20 102h1v1h-1zM19 103h1v1h-1zM18 104h1v1h-1zM13 105h2v1h-2zM17 105h1v1h-1zM13 106h4v1h-4zM13 107h2v1h-2zM13 108h2v1h-2zM10 109h5v1h-5zM13 110h2v1h-2zM13 111h2v1h-2zM13 112h3v1h-3zM13 113h2v1h-2zM16 113h1v1h-1zM17 114h1v1h-1zM17 115h3v1h-3zM18 116h2v1h-2zM20 117h1v1h-1z"/>
 <path fill="#f0f0f0" d="M8 427h2v1h-2zM8 429h2v1h-2zM8 430h2v1h-2zM8 432h2v1h-2zM8 433h2v1h-2zM8 435h2v1h-2zM8 436h2v1h-2zM8 438h2v1h-2zM8 439h2v1h-2zM8 441h2v1h-2zM11 441h2v1h-2zM14 441h2v1h-2zM17 441h2v1h-2zM20 441h2v1h-2zM23 441h1v1h-1zM8 442h2v1h-2zM11 442h2v1h-2zM14 442h2v1h-2zM17 442h2v1h-2zM20 442h2v1h-2zM23 442h1v1h-1z"/><path fill="#000" d="M10 427h1v1h-1zM8 428h3v1h-3zM10 429h1v1h-1zM10 430h1v1h-1zM8 431h3v1h-3zM10 432h1v1h-1zM10 433h1v1h-1zM8 434h3v1h-3zM10 435h1v1h-1zM10 436h1v1h-1zM8 437h3v1h-3zM10 438h1v1h-1zM10 439h1v1h-1zM8 440h16v1h-16zM10 441h1v1h-1zM13 441h1v1h-1zM16 441h1v1h-1zM19 441h1v1h-1zM22 441h1v1h-1zM10 442h1v1h-1zM13 442h1v1h-1zM16 442h1v1h-1zM19 442h1v1h-1zM22 442h1v1h-1z"/><path fill="#c0c0c0" d="M11 427h13v1h-13zM11 428h13v1h-13zM11 429h13v1h-13zM11 430h12v1h-12zM11 431h3v1h-3zM18 431h3v1h-3zM11 432h2v1h-2zM19 432h2v1h-2zM23 432h1v1h-1zM11 433h1v1h-1zM14 433h3v1h-3zM22 433h2v1h-2zM13 434h6v1h-6zM22 434h2v1h-2zM12 435h12v1h-12zM11 436h13v1h-13zM11 437h13v1h-13zM11 438h13v1h-13zM11 439h13v1h-13z"/><path fill="#f00" d="M23 430h1v1h-1zM14 431h4v1h-4zM21 431h3v1h-3zM13 432h6v1h-6zM21 432h2v1h-2zM12 433h2v1h-2zM17 433h5v1h-5zM11 434h2v1h-2zM19 434h3v1h-3zM11 435h1v1h-1z"/>
</svg><!--/GLYPHS-->
<!-- taskbar -->
<!--TASK-->
<div class="a" style="left:0;top:724px;width:1024px;height:44px;background:#d4d0c8"></div>
<div class="a" style="left:0;top:725px;width:1024px;height:1px;background:#fff"></div>
<!-- start button -->
<div class="a tbtn" style="left:2px;top:728px;width:52px;height:38px"></div>
<div class="a" style="left:20px;top:739px;font-weight:bold;font-size:11.5px;line-height:14px;letter-spacing:.55px">Start</div>
<svg class="a" style="left:4px;top:738px" width="17" height="15" viewBox="0 0 17 15">
 <path d="M1.5 6.5Q3 4 6.5 6L8 1.5Q5 0 2.5 1.5z" fill="#f25022"/>
 <path d="M9 2Q12 3.5 16 1.5L14.5 6.5Q11.5 8 8 6.5z" fill="#7fba00"/>
 <path d="M1.2 7.5Q3 5.5 6.3 7L5 12.5Q2.5 11 0 12.5z" fill="#00a4ef"/>
 <path d="M7.5 7.5Q11 9 14.2 7.2L13 13Q9.5 14.5 6 12.8z" fill="#ffb900"/>
</svg>
<div class="a" style="left:61px;top:730px;width:1px;height:34px;background:#fff"></div>
<div class="a" style="left:62px;top:730px;width:1px;height:34px;background:#808080"></div>
<!-- buttons -->
<div class="a tbtn" style="left:222px;top:728px;width:49px;height:38px"></div>
<div class="a tbtn" style="left:372px;top:728px;width:47px;height:37px;background:#fff;box-shadow:inset 1px 1px #404040,inset 2px 2px #808080,inset -1px -1px #fff,inset -2px -2px #d4d0c8"></div>
<div class="a tbtn" style="left:422px;top:728px;width:49px;height:38px"></div>
<div class="a tbtn" style="left:472px;top:728px;width:49px;height:38px"></div>
<div class="a tbtn" style="left:522px;top:728px;width:49px;height:38px"></div>
<div class="a tbtn" style="left:572px;top:728px;width:49px;height:38px"></div>
<div class="a tbtn" style="left:622px;top:728px;width:49px;height:38px"></div>
<div class="a tbtn" style="left:672px;top:728px;width:49px;height:38px"></div>
<div class="a tbtn" style="left:722px;top:728px;width:49px;height:38px"></div>
<svg class="a" style="left:0;top:724px" width="800" height="44">
 <!-- word -->
 <path d="M98.5 10.5H111.5V35.5H98.5z" fill="#fff" stroke="#2b579a" shape-rendering="crispEdges"/>
 <path d="M100 13.5h9M100 16.5h9M100 19.5h9M100 22.5h9M100 25.5h9M100 28.5h9M100 31.5h9" stroke="#2b579a" stroke-width="1" shape-rendering="crispEdges"/>
 <path d="M81 11L99 8V38L81 35z" fill="#2b579a"/>
 <text x="83.5" y="28" font-family="Liberation Sans" font-weight="bold" font-size="13" fill="#fff">W</text>
 <!-- explorer -->
 <defs><linearGradient id="fy" x1="0" y1="0" x2="0" y2="1"><stop offset="0" stop-color="#fdf0b8"/><stop offset="1" stop-color="#e8c860"/></linearGradient>
 <linearGradient id="fb" x1="0" y1="0" x2="0" y2="1"><stop offset="0" stop-color="#c8ecfc"/><stop offset="1" stop-color="#58b0e0"/></linearGradient></defs>
 <path d="M131.5 11.5h12l1 1v3h-13z" fill="#fbefc0" stroke="#c8a850"/>
 <path d="M139.5 13.5h12l1 1v3h-13z" fill="#fbefc0" stroke="#c8a850"/>
 <path d="M147.5 15.5h12l1 1v3h-13z" fill="#fbefc0" stroke="#c8a850"/>
 <rect x="133" y="12" width="3" height="2" fill="#10c010"/><rect x="141" y="14" width="3" height="2" fill="#e02020"/><rect x="149" y="16" width="3" height="2" fill="#2090f0"/>
 <path d="M131.5 17.5h30v18h-30z" fill="url(#fy)" stroke="#c8a850"/>
 <path d="M134.5 26.5h22l1 1v10.5h-6v-6h-11v6h-6z" fill="url(#fb)" stroke="#4a98c8"/>
 <path d="M136 24l1 5M133 28l5-1M135 26l4-3" stroke="#fff" stroke-width=".8" opacity=".9"/>
<!-- wmp -->
 <rect x="184" y="12" width="26" height="23" fill="#9fd0f0" stroke="#6aa8d8"/>
 <rect x="182" y="11" width="24" height="25" fill="#b8dcf6" stroke="#6aa8d8"/>
 <circle cx="193.5" cy="23.5" r="9" fill="#f07820"/>
 <path d="M190 18v11l8.5-5.5z" fill="#fff"/>
 <!-- chrome -->
 <circle cx="246" cy="23" r="15.5" fill="#1da462"/>
 <path d="M246 7.5A15.5 15.5 0 0 1 259.4 15.3H246A7.7 7.7 0 0 0 239.3 19.2L232.6 15.3A15.5 15.5 0 0 1 246 7.5z" fill="#db4437"/>
 <path d="M259.4 15.3A15.5 15.5 0 0 1 246 38.5L252.7 26.9A7.7 7.7 0 0 0 252.7 19.1z" fill="#ffcd40"/>
 <circle cx="246" cy="23" r="7" fill="#fff"/><circle cx="246" cy="23" r="5.6" fill="#4285f4"/>
 <!-- edge -->
 <defs><linearGradient id="eg" x1="0" y1="0.2" x2="1" y2="0.6"><stop offset="0" stop-color="#2ca8f0"/><stop offset=".5" stop-color="#2cc0c8"/><stop offset="1" stop-color="#5cdc50"/></linearGradient></defs>
 <circle cx="296" cy="22.8" r="16" fill="url(#eg)"/>
 <path d="M280.2 24C280 18 285 14.5 291 14.5C296 14.5 299 17 300.5 20.5L295 21C291 21 289 25 289.5 29L310.5 30.5A16 16 0 0 1 280.2 24Z" fill="#1a84dc"/>
 <path d="M290 26C290 32 294 37.5 301 37.8C305 37.8 308.5 35 310.5 30.5C306 32.5 301 32.5 297.5 30.5C294.5 29 292.5 27 292.5 24Z" fill="#0f52a4"/>
 <circle cx="296.5" cy="23.5" r="4" fill="#d4d0c8"/>
 <path d="M295 26.5C298 30 303.5 31.5 310.5 30.5L310 30C305 30 301 28.5 299 25.5Z" fill="#d4d0c8"/>
<!-- geogebra -->
 <rect x="330" y="7" width="32" height="32" rx="3" fill="#fff"/>
 <path d="M345.5 13.5L356 19.5L352 30L339.5 31.5L336 21z" fill="none" stroke="#555" stroke-width="1.3"/>
 <g fill="#9999ff" stroke="#333" stroke-width=".8"><circle cx="345.5" cy="13.5" r="2.5"/><circle cx="356" cy="19.5" r="2.5"/><circle cx="352" cy="30" r="2.5"/><circle cx="339.5" cy="31.5" r="2.5"/><circle cx="336" cy="21" r="2.5"/></g>
 <!-- LT -->
 <g transform="translate(380,12.5)" fill="#800000"><path d="M0 19.8H15L16.8 17.4H11.9Q10 15 10 11.5Q10 7 15 0.1H12.9Q9.8 2.6 7.7 6.8L4.6 14.6z"/><path d="M17.1 0H32.2L27.5 4.7Q26 9.9 23.3 14.6Q21 18.7 17.3 20L19.2 16.1Q21 12.5 21.8 8.9Q21.8 4.7 19.2 2.9H15.6z"/></g>
 <!-- itunes -->
 <defs><linearGradient id="itr" x1="0.3" y1="0" x2="0.7" y2="1"><stop offset="0" stop-color="#fa4a6a"/><stop offset=".5" stop-color="#c050e0"/><stop offset="1" stop-color="#40b8f0"/></linearGradient>
 <linearGradient id="itn" x1="0" y1="0" x2="0" y2="1"><stop offset="0" stop-color="#f04060"/><stop offset=".5" stop-color="#a050e8"/><stop offset="1" stop-color="#3a90f0"/></linearGradient></defs>
 <circle cx="446" cy="23" r="13.6" fill="#f6f6fa" stroke="url(#itr)" stroke-width="1.6"/>
 <path d="M443.5 13.5L452.5 11.5V24.5A2.6 2 0 1 1 450.8 22.7V16L445 17.3V27A2.8 2.1 0 1 1 443.5 25z" fill="url(#itn)"/>
 <!-- pcb -->
 <path d="M496 13L510 23L496 37.5L482 25z" fill="#58a050"/>
 <path d="M484 24l10 8M486 22l10 8M497 16l6 6M499 15l7 6M493 21l4 5 5-1M495 19l4 5" stroke="#d08828" stroke-width="1.1" fill="none"/>
 <g fill="#f08030"><circle cx="485" cy="26" r=".9"/><circle cx="487.5" cy="28" r=".9"/><circle cx="490" cy="30" r=".9"/><circle cx="492.5" cy="32" r=".9"/><circle cx="495" cy="34" r=".9"/><circle cx="497" cy="14.5" r=".9"/><circle cx="499.5" cy="16.5" r=".9"/><circle cx="502" cy="18.5" r=".9"/><circle cx="504.5" cy="20.5" r=".9"/><circle cx="507" cy="22" r=".9"/></g>
 <path d="M481.5 8L494 33" stroke="#1a2030" stroke-width="2.6"/><path d="M481.5 8L494 33" stroke="#5080c0" stroke-width="1.2"/>
<!-- opera -->
 <ellipse cx="546" cy="23" rx="15" ry="15.5" fill="#e0141e"/><ellipse cx="546" cy="23" rx="6" ry="11.5" fill="#d4d0c8"/>
 <!-- mcafee -->
 <path d="M582 10L596 16L610 10V32L596 39L582 32z" fill="#c83232"/><path d="M587 19L596 23L605 19V29L596 34L587 29z" fill="#d4d0c8"/>
 <!-- LT2 -->
 <path d="M631 38.5V7.5L639 12M631 38.5L656.5 22.5" fill="none" stroke="#000" stroke-width="2"/>
 <g transform="translate(633,8) scale(0.9,0.74)" fill="#800000" stroke="#000" stroke-width="1.1"><path d="M0 19.8H15L16.8 17.4H11.9Q10 15 10 11.5Q10 7 15 0.1H12.9Q9.8 2.6 7.7 6.8L4.6 14.6z"/><path d="M17.1 0H32.2L27.5 4.7Q26 9.9 23.3 14.6Q21 18.7 17.3 20L19.2 16.1Q21 12.5 21.8 8.9Q21.8 4.7 19.2 2.9H15.6z"/></g>
<!-- paint -->
 <defs><linearGradient id="pal" x1="0" y1="0" x2="0" y2="1"><stop offset="0" stop-color="#eef8fd"/><stop offset="1" stop-color="#b8dcf2"/></linearGradient>
 <linearGradient id="sky" x1="0" y1="0" x2="0" y2="1"><stop offset="0" stop-color="#2a78d0"/><stop offset="1" stop-color="#b0dcf4"/></linearGradient>
 <linearGradient id="wat" x1="0" y1="0" x2="0" y2="1"><stop offset="0" stop-color="#4a88c0"/><stop offset="1" stop-color="#2a5a98"/></linearGradient></defs>
 <path d="M681 27C679 19 688 13 698 13C706 13 710 17 708 22C706 27 701 27 702 31C703 35 697 37 690 36C686 36 682 33 681 27z" fill="url(#pal)" stroke="#5aa0d0"/>
 <circle cx="685.5" cy="24.5" r="2.4" fill="#e03838"/><circle cx="690.5" cy="19.8" r="2.4" fill="#48b038"/><circle cx="697" cy="17.2" r="2.5" fill="#f0b010"/>
 <circle cx="693.5" cy="26" r="2" fill="none" stroke="#5a90c0" stroke-width="1.1"/>
 <path d="M705.5 15L696 37.5" stroke="#e88a20" stroke-width="2.6" stroke-linecap="round"/>
 <path d="M704 14.5l2.5 1.2 1.5-3-2.5-1.2z" fill="#909090"/>
 <path d="M705.5 11.5L704 8.5Q707 7 711.5 9.5L708.5 13z" fill="#d8b070"/>
 <!-- photos -->
 <rect x="733" y="10.5" width="26.5" height="21.5" fill="#fff"/>
 <rect x="734" y="11.5" width="24.5" height="19.5" fill="url(#sky)"/>
 <ellipse cx="753" cy="15" rx="4" ry="2.5" fill="#e8f4fc" opacity=".8"/><ellipse cx="741" cy="17" rx="3.5" ry="1.5" fill="#e8f4fc" opacity=".7"/>
 <path d="M734 18Q738 18 742 21.5T752 24L758.5 25V26.5H734z" fill="#2a8a58"/>
 <rect x="734" y="25.5" width="24.5" height="5.5" fill="url(#wat)"/>
 <path d="M732 17V10H739M753 10H760V17M732 26V33H739M753 33H760V26" fill="none" stroke="#3a80c8" stroke-width="2.6"/>
</svg>
<!-- tray -->
<div class="a" style="left:829px;top:730px;width:1px;height:33px;background:#fff"></div>
<div class="a" style="left:830px;top:730px;width:1px;height:33px;background:#808080"></div>
<div class="a" style="left:842px;top:737px;font-size:13px;line-height:15px">IT</div>
<div class="a" style="left:860px;top:734px;width:1px;height:23px;background:#808080"></div>
<div class="a" style="left:861px;top:734px;width:1px;height:23px;background:#fff"></div>
<div class="a" style="left:864px;top:728px;width:158px;height:38px;box-shadow:inset 1px 1px #808080,inset -1px -1px #fff"></div>
<div class="a tt" style="left:955px;top:733px">17:24</div>
<div class="a tt" style="left:940px;top:749px;letter-spacing:.15px">23/12/2021</div>
<svg class="a" style="left:860px;top:724px" width="164" height="44">
 <defs><linearGradient id="scr" x1="0" y1="0" x2="0" y2="1"><stop offset="0" stop-color="#c8c8c8"/><stop offset="1" stop-color="#8c8c8c"/></linearGradient>
 <linearGradient id="sd" x1="0" y1="0" x2="1" y2="1"><stop offset="0" stop-color="#1a40a8"/><stop offset="1" stop-color="#70b0f8"/></linearGradient></defs>
 <path d="M11 20.5l3-3 3 3M11 24.5l3-3 3 3" fill="none" stroke="#000" stroke-width="1.6"/>
 <rect x="31.5" y="17.5" width="11" height="11" rx="1" fill="url(#scr)" stroke="#606060"/>
 <path d="M31.5 29.5h8v1.5h-8z" fill="#fff" stroke="#606060"/>
 <path d="M27.5 15.5v4.5q0 2 2.5 2t2.5-2v-4.5h-1.2v4h-0.6v-4h-1.4v4h-0.6v-4z" fill="#fff" stroke="#606060"/>
 <path d="M30 22v8.5" stroke="#606060" stroke-width="1.2"/>
 <path d="M51.5 19.5h2.5v7h-2.5z" fill="#fff" stroke="#707070"/>
 <path d="M54 19.5l4.5-4.5v16l-4.5-4.5z" fill="#fff" stroke="#707070"/>
 <path d="M61 20.5q1.8 3 0 6M63.5 18q3.2 5.5 0 11" fill="none" stroke="#808080" stroke-width="1.1"/>
 <rect x="144.5" y="17.5" width="15" height="12" fill="url(#sd)" stroke="#b8d0f0"/>
 <rect x="145" y="26" width="14" height="2.5" fill="#282828"/>
 <circle cx="148" cy="27" r="2" fill="#2a78d8"/><circle cx="147.6" cy="26.6" r=".8" fill="#f04020"/><circle cx="148.6" cy="27.4" r=".8" fill="#f0c020"/>
</svg>
<!--/TASK-->
</body></html>
